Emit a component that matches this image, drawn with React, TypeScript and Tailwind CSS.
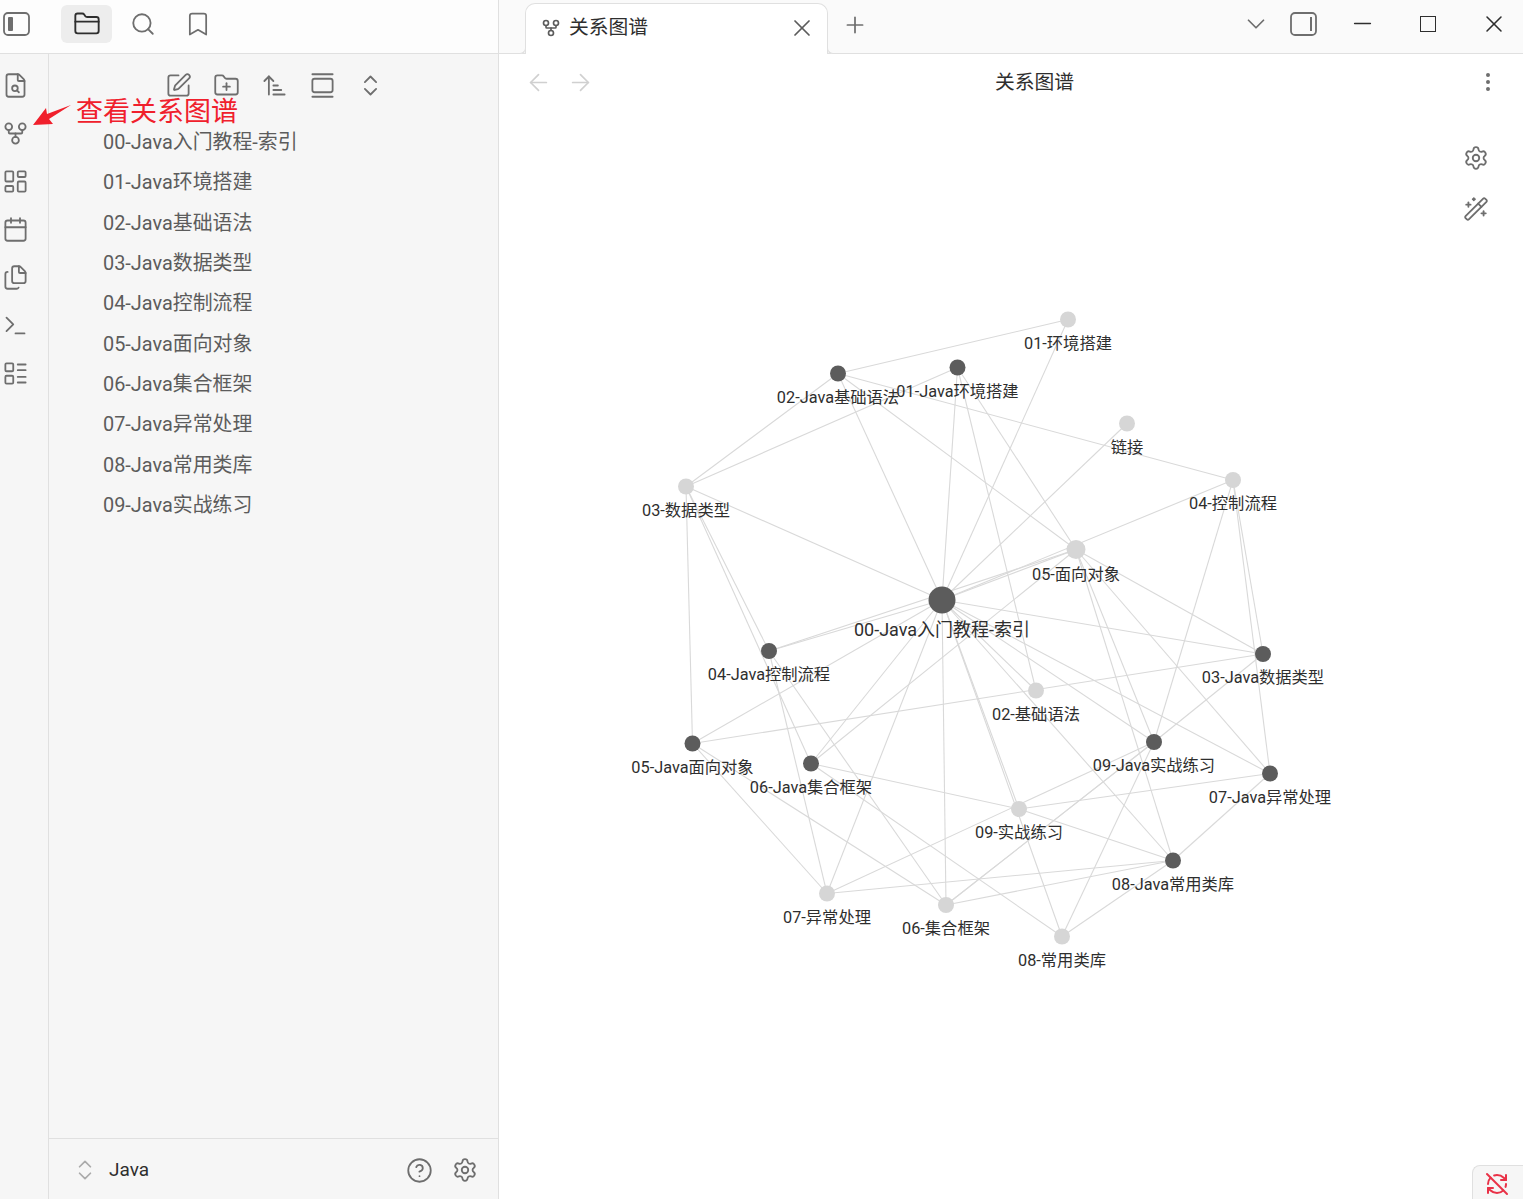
import {
  ArrowLeft, ArrowRight, ArrowUpNarrowWide, Bookmark, Calendar, ChevronDown, ChevronsUpDown,
  CircleHelp, EllipsisVertical, FileSearch, Files, FolderClosed, FolderPlus, GalleryVertical,
  GitFork, LayoutDashboard, LayoutList, Minus, Plus, RefreshCwOff, Search, Settings,
  SquarePen, Terminal, WandSparkles, X,
} from "lucide-react"

const files = [
  "00-Java入门教程-索引", "01-Java环境搭建", "02-Java基础语法", "03-Java数据类型", "04-Java控制流程",
  "05-Java面向对象", "06-Java集合框架", "07-Java异常处理", "08-Java常用类库", "09-Java实战练习",
]

// x, y, radius, label, resolved (dark) or not, label y
const nodes: Record<string, { x: number; y: number; r: number; label: string; dark?: boolean; ly: number }> = {
  n00: { x: 942, y: 600, r: 13.5, label: "00-Java入门教程-索引", dark: true, ly: 636 },
  e01: { x: 1068, y: 319.5, r: 8, label: "01-环境搭建", ly: 349 },
  j01: { x: 957.5, y: 367.5, r: 8, label: "01-Java环境搭建", dark: true, ly: 397 },
  j02: { x: 838, y: 373.5, r: 8, label: "02-Java基础语法", dark: true, ly: 403 },
  lnk: { x: 1127, y: 423.5, r: 8, label: "链接", ly: 453 },
  c04: { x: 1233, y: 480, r: 8, label: "04-控制流程", ly: 509 },
  s03: { x: 686, y: 486.5, r: 8, label: "03-数据类型", ly: 516 },
  o05: { x: 1076, y: 549.5, r: 9.5, label: "05-面向对象", ly: 580 },
  j04: { x: 769, y: 651, r: 8, label: "04-Java控制流程", dark: true, ly: 680 },
  j03: { x: 1263, y: 654, r: 8, label: "03-Java数据类型", dark: true, ly: 683 },
  g02: { x: 1036, y: 690.5, r: 8, label: "02-基础语法", ly: 720 },
  j05: { x: 692.5, y: 743.5, r: 8, label: "05-Java面向对象", dark: true, ly: 773 },
  j09: { x: 1154, y: 742, r: 8, label: "09-Java实战练习", dark: true, ly: 771 },
  j06: { x: 811, y: 763.5, r: 8, label: "06-Java集合框架", dark: true, ly: 793 },
  j07: { x: 1270, y: 773.5, r: 8, label: "07-Java异常处理", dark: true, ly: 803 },
  x09: { x: 1019, y: 809, r: 8, label: "09-实战练习", ly: 838 },
  j08: { x: 1173, y: 860.5, r: 8, label: "08-Java常用类库", dark: true, ly: 890 },
  y07: { x: 827, y: 893.5, r: 8, label: "07-异常处理", ly: 923 },
  y06: { x: 946, y: 905, r: 8, label: "06-集合框架", ly: 934 },
  y08: { x: 1062, y: 936.5, r: 8, label: "08-常用类库", ly: 966 },
}

const edges = [
  "n00-e01", "n00-j01", "n00-j02", "n00-lnk", "n00-c04", "n00-s03", "n00-o05", "n00-j04", "n00-j03", "n00-g02",
  "n00-j05", "n00-j09", "n00-j06", "n00-j07", "n00-x09", "n00-j08", "n00-y07", "n00-y06", "n00-y08",
  "j02-e01", "j02-s03", "j01-s03", "j02-o05", "j02-c04", "j01-o05", "j01-g02",
  "s03-j05", "s03-j04", "s03-j06", "j05-j03", "j05-y07", "j05-y06", "j04-y07", "j04-y06", "j04-o05",
  "j06-y08", "j06-x09", "j06-o05", "x09-j08", "x09-j07", "y07-j09", "y07-j08", "y06-j08",
  "y06-j09", "y06-j09", "y08-j08", "y08-j09", "j09-j03", "j09-c04", "j09-o05", "o05-j08", "o05-j07", "o05-j03",
  "c04-j03", "c04-j07", "j07-j08",
]

const fontStack = "font-['Roboto','Noto_Sans_CJK_SC',sans-serif]"

function Graph() {
  return (
    <svg className="absolute left-0 top-0" width={1523} height={1199} viewBox="0 0 1523 1199">
      {edges.map((e, i) => {
        const [a, b] = e.split("-")
        return <line key={i} x1={nodes[a].x} y1={nodes[a].y} x2={nodes[b].x} y2={nodes[b].y} stroke="#d9d9d9" strokeWidth={1.1} />
      })}
      {Object.entries(nodes).map(([id, n]) => (
        <circle key={id} cx={n.x} cy={n.y} r={n.r} fill={n.dark ? "#5c5c5c" : "#d6d6d6"} />
      ))}
      {Object.entries(nodes).map(([id, n]) => (
        <text key={id} x={n.x} y={n.ly} textAnchor="middle" fill="#2e2e2e" className={id === "n00" ? "text-[18px]" : "text-[16.3px]"}>
          {n.label}
        </text>
      ))}
    </svg>
  )
}

function Ribbon() {
  const icons = [FileSearch, GitFork, LayoutDashboard, Calendar, Files, Terminal, LayoutList]
  return (
    <div className="flex w-[49px] shrink-0 flex-col gap-[21px] border-r border-[#e0e0e0] pl-[1.5px] pt-[17.5px]">
      {icons.map((Icon, i) => (
        <Icon key={i} className="size-[27px] text-[#6e6e6e]" strokeWidth={1.6} />
      ))}
    </div>
  )
}

function SidebarToggle({ right }: { right?: boolean }) {
  return (
    <svg width={28} height={24} viewBox="0 0 28 24" fill="none" className="text-[#6e6e6e]">
      <rect x={1} y={1} width={25} height={22} rx={4} stroke="currentColor" strokeWidth={1.8} />
      {right ? (
        <rect x={20} y={5} width={2} height={14} fill="currentColor" />
      ) : (
        <rect x={5} y={5} width={5} height={14} rx={1} fill="currentColor" />
      )}
    </svg>
  )
}

export default function App() {
  return (
    <div className={`relative flex h-[1199px] w-[1523px] overflow-hidden bg-white ${fontStack}`}>
      {/* 左侧 */}
      <div className="flex w-[499px] shrink-0 flex-col border-r border-[#e0e0e0] bg-[#f6f6f6]">
        <div className="flex h-[54px] shrink-0 items-center border-b border-[#e0e0e0] bg-[#fdfdfd] pb-[6px]">
          <div className="ml-[3px]">
            <SidebarToggle />
          </div>
          <div className="ml-[30px] flex h-[38px] w-[51px] items-center justify-center rounded-md bg-[#ededed]">
            <FolderClosed className="size-[28px] text-[#2e2e2e]" strokeWidth={1.6} />
          </div>
          <Search className="ml-[18px] size-[26px] text-[#6e6e6e]" strokeWidth={1.7} />
          <Bookmark className="ml-[28px] size-[28px] text-[#6e6e6e]" strokeWidth={1.5} />
        </div>
        <div className="flex min-h-0 flex-1">
          <Ribbon />
          <div className="flex min-w-0 flex-1 flex-col">
            <div className="flex h-[62px] items-center gap-[21px] pl-[115.5px]">
              <SquarePen className="size-[27px] text-[#6e6e6e]" strokeWidth={1.6} />
              <FolderPlus className="size-[27px] text-[#6e6e6e]" strokeWidth={1.6} />
              <ArrowUpNarrowWide className="size-[27px] text-[#6e6e6e]" strokeWidth={1.6} />
              <GalleryVertical className="size-[27px] text-[#6e6e6e]" strokeWidth={1.6} />
              <ChevronsUpDown className="size-[27px] text-[#6e6e6e]" strokeWidth={1.6} />
            </div>
            <div className="flex flex-1 flex-col pl-[54px] pt-[6.8px]">
              {files.map((f) => (
                <div key={f} className="flex h-[40.33px] items-center text-[19.9px] text-[#5c5c5c]">
                  {f}
                </div>
              ))}
            </div>
            <div className="flex h-[61px] items-center border-t border-[#e0e0e0] pl-[23px] pr-[20px] pt-[2px]">
              <ChevronsUpDown className="size-[26px] text-[#ababab]" strokeWidth={1.6} />
              <span className="ml-[11px] text-[19px] text-[#2e2e2e]">Java</span>
              <CircleHelp className="ml-auto size-[27px] text-[#6e6e6e]" strokeWidth={1.6} />
              <Settings className="ml-[19.5px] size-[26px] text-[#6e6e6e]" strokeWidth={1.7} />
            </div>
          </div>
        </div>
      </div>

      {/* 右侧 */}
      <div className="flex min-w-0 flex-1 flex-col">
        <div className="flex h-[54px] shrink-0 items-end border-b border-[#e0e0e0] bg-[#fafafa]">
          <div className="relative z-10 -mb-px ml-[26px] flex h-[51px] w-[303px] items-center rounded-t-[10px] border border-b-0 border-[#e0e0e0] bg-white pb-[2px] pl-[15px] pr-[11px]">
            <span className="absolute -left-[7px] bottom-0 size-[7px] rounded-br-[6px] border-b border-r border-[#e0e0e0] bg-[#fafafa]" />
            <span className="absolute -right-[7px] bottom-0 size-[7px] rounded-bl-[6px] border-b border-l border-[#e0e0e0] bg-[#fafafa]" />
            <GitFork className="size-[20px] text-[#5c5c5c]" strokeWidth={2} />
            <span className="ml-[8px] text-[19.8px] text-[#2e2e2e]">关系图谱</span>
            <X className="ml-auto size-[28px] text-[#5c5c5c]" strokeWidth={1.5} />
          </div>
          <div className="flex h-[54px] flex-1 items-center pb-[5px]">
            <Plus className="ml-[13.5px] mt-[3px] size-[26px] text-[#6e6e6e]" strokeWidth={1.6} />
            <ChevronDown className="ml-auto size-[30px] text-[#6e6e6e]" strokeWidth={1.4} />
            <div className="ml-[19.5px]">
              <SidebarToggle right />
            </div>
            <Minus className="ml-[30.5px] size-[27px] text-[#2e2e2e]" strokeWidth={1.3} />
            <span className="ml-[44.5px] size-[16px] border-[1.5px] border-[#2e2e2e]" />
            <X className="ml-[44px] mr-[15px] size-[28px] text-[#2e2e2e]" strokeWidth={1.3} />
          </div>
        </div>
        <div className="flex h-[56px] items-center pl-[25.5px] pr-[23px]">
          <ArrowLeft className="size-[27px] text-[#d0d0d0]" strokeWidth={1.5} />
          <ArrowRight className="ml-[15px] size-[27px] text-[#d0d0d0]" strokeWidth={1.5} />
          <span className="ml-[401.5px] pt-px text-[19.8px] text-[#2e2e2e]">关系图谱</span>
          <EllipsisVertical className="ml-auto size-6 text-[#6e6e6e]" strokeWidth={2} />
        </div>
        <div className="flex flex-col items-end gap-[25px] pr-[34px] pt-[35px]">
          <Settings className="size-[26px] text-[#6e6e6e]" strokeWidth={1.7} />
          <WandSparkles className="size-[26px] text-[#6e6e6e]" strokeWidth={1.7} />
        </div>
      </div>

      <Graph />

      {/* 标注 */}
      <svg className="absolute left-[32px] top-[103px]" width={40} height={24} viewBox="0 0 40 24">
        <path d="M1 22 L14 5 L15 11 L39 2 L17 16 L21 21 Z" fill="#f0202c" />
      </svg>
      <span className="absolute left-[76px] top-[93px] text-[27px] leading-[38px] text-[#f0202c]">查看关系图谱</span>

      <div className="absolute bottom-0 right-0 flex h-[34px] w-[51px] items-center justify-center rounded-tl-lg border-l border-t border-[#e0e0e0] bg-[#f6f6f6] pr-[2px] pt-[3px]">
        <RefreshCwOff className="size-[24px] text-[#e93147]" strokeWidth={2} />
      </div>
    </div>
  )
}
